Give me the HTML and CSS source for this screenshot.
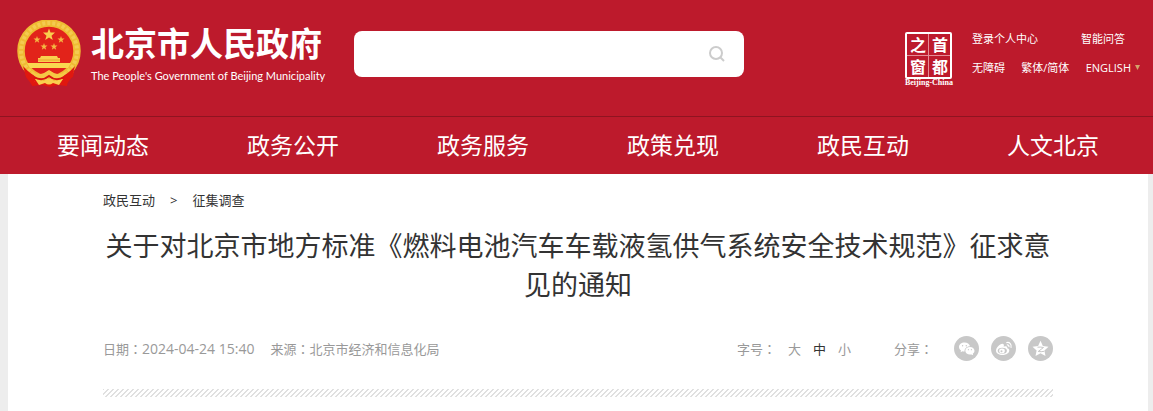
FILE: index.html
```
<!DOCTYPE html>
<html lang="zh-CN">
<head>
    <meta charset="UTF-8">
    <meta name="viewport" content="width=device-width, initial-scale=1.0">
    <title>北京市人民政府</title>
    <link rel="stylesheet" href="styles.css">
</head>
<body>
    <header class="header">
        <div class="header-top">
            <a class="logo" href="#">
                <svg class="emblem" viewBox="0 0 66 68" aria-hidden="true">
                    <path d="M6 42 L9 57 L14 59 L15 66 L25 65 L33 67 L41 65 L50 66 L51 59 L56 57 L59 42 Z" fill="#e0180f"/>
                    <path d="M9 52 L17 62 M56 52 L48 62" stroke="#f0402a" stroke-width="2"/>
                    <circle cx="32" cy="31" r="28" fill="#e2231a" stroke="#efbb33" stroke-width="7.500"/>
                    <circle cx="32" cy="31" r="28" fill="none" stroke="#f4cb50" stroke-width="4" stroke-dasharray="3 2"/>
                    <path d="M6 46 Q13 54 20 57 L15 65 L9 57 Z M58 46 Q51 54 44 57 L49 65 L55 57 Z" fill="#e0180f"/>
                    <path d="M10 43 H54 L51 48 H13 Z" fill="#f9d850"/>
                    <path d="M24 36 H40 L41 38 H43 V42 H21 V38 H23 Z" fill="#f9cf4e"/>
                    <path d="M21 40 H43" stroke="#e8a52b"/>
                    <path d="M32 8.500 L33.500 12.500 H38 L34.500 15.700 L35.800 20 L32 17.500 L28.200 20 L29.500 15.700 L26 12.500 H30.500 Z" fill="#f9cf4e"/>
                    <g fill="#f4b943">
                        <path id="star" d="M20 16 L20.900 18.500 H23.500 L21.400 20.200 L22.200 22.800 L20 21.300 L17.800 22.800 L18.600 20.200 L16.500 18.500 H19.100 Z"/>
                        <use href="#star" x="24"/>
                        <use href="#star" x="7" y="7"/>
                        <use href="#star" x="17" y="7"/>
                    </g>
                    <path d="M13 50 Q20 56 27 53 L32 50 L37 53 Q44 56 51 50 L45 58 Q38 61 32 57 Q26 61 19 58 Z" fill="#f5c945"/>
                    <path d="M18 59 L27 61 Q32 57 37 61 L46 59 L42 65 L36 63 Q32 66 28 63 L22 65 Z" fill="#f9cf4e"/>
                    <path d="M17 57 Q25 62 32 56 Q39 62 47 57" fill="none" stroke="#d9150f" stroke-width="2"/>
                </svg>
                <span class="logo-text">
                    <span class="logo-name">北京市人民政府</span>
                    <span class="logo-sub">The People's Government of Beijing Municipality</span>
                </span>
            </a>
            <form class="search" role="search">
                <input class="search-input" type="text" aria-label="搜索">
                <button class="search-btn" type="button" aria-label="搜索">
                    <svg width="18" height="18" viewBox="0 0 18 18" fill="none" stroke="#ccc" stroke-width="2">
                        <circle cx="8" cy="8" r="6"/>
                        <path d="M12 12 L16 16"/>
                    </svg>
                </button>
            </form>
            <div class="tools">
                <a class="capital" href="#">
                    <span class="seal">
                        <span>之</span><span>首</span>
                        <span>窗</span><span>都</span>
                    </span>
                    <span class="seal-name">Beijing-China</span>
                </a>
                <div class="tool-links">
                    <div class="tool-row">
                        <a href="#">登录个人中心</a>
                        <a href="#" class="tool-qa">智能问答</a>
                    </div>
                    <div class="tool-row">
                        <a href="#">无障碍</a>
                        <a href="#">繁体/简体</a>
                        <a href="#" class="english">ENGLISH<svg width="5" height="5" viewBox="0 0 5 5"><path d="M0 0 H5 L2.500 5 Z" fill="#d3a36b"/></svg></a>
                    </div>
                </div>
            </div>
        </div>
        <nav class="nav">
            <a href="#">要闻动态</a>
            <a href="#">政务公开</a>
            <a href="#">政务服务</a>
            <a href="#">政策兑现</a>
            <a href="#">政民互动</a>
            <a href="#">人文北京</a>
        </nav>
    </header>
    <main class="main">
        <div class="crumbs">
            <a href="#">政民互动</a>
            <span>&gt;</span>
            <a href="#">征集调查</a>
        </div>
        <h1 class="title">关于对北京市地方标准《燃料电池汽车车载液氢供气系统安全技术规范》征求意见的通知</h1>
        <div class="meta">
            <div class="meta-info">
                <span>日期<span class="colon" lang="zh-TW">：</span><time class="date">2024-04-24 15:40</time></span>
                <span>来源<span class="colon" lang="zh-TW">：</span>北京市经济和信息化局</span>
            </div>
            <div class="font-size">
                <span>字号<span class="colon" lang="zh-TW">：</span></span>
                <button type="button">大</button>
                <button type="button" class="active">中</button>
                <button type="button">小</button>
            </div>
            <div class="share">
                <span class="share-label">分享<span class="colon" lang="zh-TW">：</span></span>
                <a href="#" aria-label="微信">
                    <svg viewBox="0 0 25 25">
                        <circle cx="12.500" cy="12.500" r="12.500" fill="#c8c8c8"/>
                        <path d="M10.500 6.500 C7.300 6.500 5 8.500 5 11 C5 12.500 5.800 13.700 7 14.500 L6.500 16.200 L8.600 15.200 C9.200 15.400 9.900 15.500 10.600 15.400 C10.300 12.300 13 10.200 16 10.200 C15.500 8 13.300 6.500 10.500 6.500 Z" fill="#fff"/>
                        <path d="M15.900 11 C13.300 11 11.300 12.700 11.300 14.800 C11.300 17 13.400 18.600 15.900 18.600 C16.500 18.600 17 18.500 17.500 18.400 L19.200 19.200 L18.800 17.700 C19.900 17 20.500 16 20.500 14.800 C20.500 12.700 18.400 11 15.900 11 Z" fill="#fff"/>
                        <g fill="#c8c8c8"><circle cx="8.600" cy="9.800" r=".7"/><circle cx="12.300" cy="9.800" r=".7"/><circle cx="14.400" cy="13.700" r=".6"/><circle cx="17.400" cy="13.700" r=".6"/></g>
                    </svg>
                </a>
                <a href="#" aria-label="微博">
                    <svg viewBox="0 0 25 25">
                        <circle cx="12.500" cy="12.500" r="12.500" fill="#c8c8c8"/>
                        <path d="M11.500 7.800 C8.500 8 5 11.800 5 14.500 C5 17.300 8 19 11.500 19 C15.500 19 18.300 16.800 18.300 14.500 C18.300 13.200 17.500 12.500 16.200 12.200 C16.800 10.300 15 9.700 12.700 10.700 C13.200 9 12.800 7.800 11.500 7.800 Z" fill="#fff"/>
                        <ellipse cx="11.300" cy="14.700" rx="4.600" ry="3" fill="#c8c8c8"/>
                        <ellipse cx="11" cy="14.900" rx="2.800" ry="2.300" fill="#fff"/>
                        <circle cx="10.500" cy="15.200" r="1" fill="#c8c8c8"/>
                        <path d="M15.300 6.700 C18.500 5.700 21 8.500 20 11.800 M15.800 9 C17.300 8.600 18.300 9.800 17.900 11.200" fill="none" stroke="#fff" stroke-width="1.200"/>
                    </svg>
                </a>
                <a href="#" aria-label="QQ空间">
                    <svg viewBox="0 0 25 25">
                        <circle cx="12.500" cy="12.500" r="12.500" fill="#c8c8c8"/>
                        <path d="M12.500 4.800 L14.900 10 L20.500 10.700 L16.400 14.500 L17.500 20 L12.500 17.300 L7.500 20 L8.600 14.500 L4.500 10.700 L10.100 10 Z" fill="#fff"/>
                        <path d="M9.500 11.200 Q13 10.800 15.500 11.500 L10.200 15.500 Q13 16 16.300 15.300" fill="none" stroke="#c8c8c8" stroke-width="1"/>
                    </svg>
                </a>
            </div>
        </div>
        <div class="divider"></div>
    </main>
</body>
</html>
```

FILE: styles.css
```
* {
    box-sizing: border-box;
}
body {
    margin: 0;
    background-color: #ededed;
    color: #333;
    font-family: "Open Sans", "Noto Sans CJK SC", sans-serif;
    font-size: 13px;
}
a {
    color: inherit;
    text-decoration: none;
}
button {
    padding: 0;
    border: none;
    background: none;
    color: inherit;
    font: inherit;
    cursor: pointer;
}
svg {
    display: block;
}

/* header */
.header {
    background-color: #bd1a2c;
    color: #fff;
}
.header-top {
    display: flex;
    align-items: flex-start;
    height: 116px;
    padding: 0 13px 0 17px;
}
.logo {
    display: flex;
    margin-top: 20px;
}
.emblem {
    width: 66px;
    height: 68px;
}
.logo-text {
    display: flex;
    flex-direction: column;
    width: 271px;
    padding-left: 8px;
    white-space: nowrap;
}
.logo-name {
    font-size: 33px;
    font-weight: bold;
    line-height: 48px;
}
.logo-sub {
    font-family: Lato, sans-serif;
    font-size: 11px;
    line-height: 16px;
}
.search {
    display: flex;
    align-items: center;
    width: 390px;
    height: 46px;
    margin-top: 31px;
    border-radius: 8px;
    background-color: #fff;
}
.search-input {
    flex: 1;
    min-width: 0;
    height: 46px;
    padding: 0 16px;
    border: none;
    background: none;
    font-size: 16px;
    outline: none;
}
.search-btn {
    padding: 0 18px;
}
.tools {
    display: flex;
    margin-left: auto;
}
.capital {
    display: flex;
    flex-direction: column;
    align-items: center;
    margin: 32px 19px 0 0;
}
.seal {
    display: grid;
    grid-template-columns: 21px 21px;
    gap: 1px;
    border: 2px solid #fff;
    border-radius: 2px;
    background: linear-gradient(#e58c95, #e58c95) center / 1px 100% no-repeat, linear-gradient(#e58c95, #e58c95) center / 100% 1px no-repeat;
    font-family: "Noto Sans CJK SC", sans-serif;
    font-size: 16px;
    font-weight: bold;
    line-height: 21px;
    text-align: center;
}
.seal-name {
    font-family: "Liberation Serif", serif;
    font-size: 8px;
    font-weight: bold;
    line-height: 8px;
}
.tool-links {
    width: 168px;
    padding-top: 24px;
    font-size: 11px;
}
.tool-row {
    display: flex;
    justify-content: space-between;
    height: 29px;
    line-height: 29px;
}
.tool-qa {
    margin-right: 15px;
}
.english {
    display: flex;
    align-items: center;
    gap: 4px;
}
.nav {
    display: flex;
    padding: 0 5px 0 8px;
    border-top: 1px solid #8f1421;
}
.nav a {
    flex: 1;
    font-size: 23px;
    line-height: 57px;
    text-align: center;
}

/* article */
.main {
    min-height: 237px;
    margin: 0 5px 0 8px;
    padding: 16px 95px 0;
    background-color: #fff;
}
.crumbs {
    display: flex;
    gap: 15px;
    line-height: 20px;
}
.title {
    margin: 16px 0 0;
    font-size: 27px;
    font-weight: normal;
    line-height: 39px;
    text-align: center;
}
.meta {
    display: flex;
    align-items: center;
    margin-top: 32px;
    color: #999;
    line-height: 20px;
}
.meta-info {
    display: flex;
    flex: 1;
    gap: 16px;
}
/* the TC face centres the full-width colon */
.colon {
    font-family: "Noto Sans CJK TC", sans-serif;
}
.date {
    font-size: 14px;
}
.font-size {
    display: flex;
    gap: 12px;
    margin-right: 43px;
}
.font-size .active {
    color: #333;
}
.share {
    display: flex;
    align-items: center;
    gap: 12px;
}
.share-label {
    margin-right: 9px;
}
.share svg {
    width: 25px;
    height: 25px;
}
.divider {
    height: 8px;
    margin-top: 28px;
    background: linear-gradient(135deg, #e0e0e0 20%, #fff 20%, #fff 50%, #e0e0e0 50%, #e0e0e0 70%, #fff 70%) 0 0 / 5px 5px;
}
```
